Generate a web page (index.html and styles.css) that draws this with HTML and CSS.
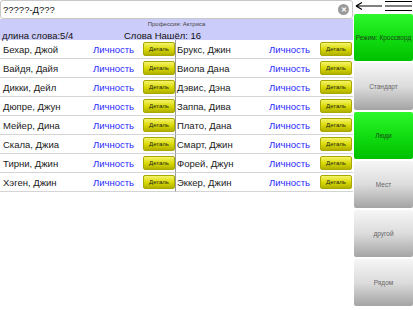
FILE: index.html
```html
<!DOCTYPE html>
<html lang="ru">
<head>
    <meta charset="UTF-8">
    <meta name="viewport" content="width=device-width, initial-scale=1.0">
    <title>Кроссворд</title>
    <link rel="stylesheet" href="styles.css">
</head>
<body>
<div class="app">
    <div class="main">
        <div class="search">
            <span class="query">?????-Д???</span>
            <span class="clear">&#x2715;</span>
        </div>
        <div class="info">
            <div class="prof">Профессия: Актриса</div>
            <div class="stats">
                <span class="len">длина слова:5/4</span>
                <span class="found">Слова Нашёл: 16</span>
            </div>
        </div>
        <div class="list">
            <div class="cell"><span class="name">Бехар, Джой</span><a class="link">Личность</a><button class="detail">Деталь</button></div>
            <div class="cell"><span class="name">Брукс, Джин</span><a class="link">Личность</a><button class="detail">Деталь</button></div>
            <div class="cell"><span class="name">Вайдя, Дайя</span><a class="link">Личность</a><button class="detail">Деталь</button></div>
            <div class="cell"><span class="name">Виола Дана</span><a class="link">Личность</a><button class="detail">Деталь</button></div>
            <div class="cell"><span class="name">Дикки, Дейл</span><a class="link">Личность</a><button class="detail">Деталь</button></div>
            <div class="cell"><span class="name">Дэвис, Дэна</span><a class="link">Личность</a><button class="detail">Деталь</button></div>
            <div class="cell"><span class="name">Дюпре, Джун</span><a class="link">Личность</a><button class="detail">Деталь</button></div>
            <div class="cell"><span class="name">Заппа, Дива</span><a class="link">Личность</a><button class="detail">Деталь</button></div>
            <div class="cell"><span class="name">Мейер, Дина</span><a class="link">Личность</a><button class="detail">Деталь</button></div>
            <div class="cell"><span class="name">Плато, Дана</span><a class="link">Личность</a><button class="detail">Деталь</button></div>
            <div class="cell"><span class="name">Скала, Джиа</span><a class="link">Личность</a><button class="detail">Деталь</button></div>
            <div class="cell"><span class="name">Смарт, Джин</span><a class="link">Личность</a><button class="detail">Деталь</button></div>
            <div class="cell"><span class="name">Тирни, Джин</span><a class="link">Личность</a><button class="detail">Деталь</button></div>
            <div class="cell"><span class="name">Форей, Джун</span><a class="link">Личность</a><button class="detail">Деталь</button></div>
            <div class="cell"><span class="name">Хэген, Джин</span><a class="link">Личность</a><button class="detail">Деталь</button></div>
            <div class="cell"><span class="name">Эккер, Джин</span><a class="link">Личность</a><button class="detail">Деталь</button></div>
        </div>
    </div>

    <div class="side">
        <div class="topbar">
            <svg class="back" width="27" height="10" viewBox="0 0 27 10">
                <path d="M1 5 H27 M1 5 L7 1.5 M1 5 L7 8.5" stroke="#000" stroke-width="1.2" fill="none"/>
            </svg>
            <svg class="menu" width="27" height="12" viewBox="0 0 27 12">
                <path d="M0 1.5 H27 M0 6 H27 M0 10.5 H27" stroke="#000" stroke-width="1.2"/>
            </svg>
        </div>
        <button class="mode green">Режим: Кроссворд</button>
        <button class="mode">Стандарт</button>
        <button class="mode green">Люди</button>
        <button class="mode">Мест</button>
        <button class="mode">другой</button>
        <button class="mode">Рядом</button>
    </div>
</div>
</body>
</html>
```

FILE: styles.css
```css
body {
    margin: 0;
    background-color: #fff;
    font-family: "Liberation Sans", Arial, sans-serif;
    color: #222;
}

.app {
    display: flex;
    width: 413px;
    height: 310px;
    overflow: hidden;
}

.main {
    width: 353px;
}

/* search box */
.search {
    height: 17px;
    border: 1px solid #c8c8c8;
    border-radius: 3px;
    display: flex;
    align-items: center;
    justify-content: space-between;
    padding: 0 3px 0 2px;
}

.query {
    font-size: 9.5px;
    color: #111;
}

.clear {
    width: 11px;
    height: 11px;
    border-radius: 50%;
    background-color: #9a9a9a;
    color: #fff;
    font-size: 7px;
    font-weight: bold;
    line-height: 11px;
    text-align: center;
}

/* info band */
.info {
    height: 21px;
    background-color: #ccccfa;
}

.prof {
    font-size: 6px;
    color: #444;
    text-align: center;
    padding-top: 2px;
    height: 8px;
}

.stats {
    font-size: 9.5px;
    color: #111;
    display: flex;
    padding-left: 2px;
    padding-top: 1px;
}

.len {
    width: 122px;
}

/* result list */
.list {
    display: grid;
    grid-template-columns: 176px 177px;
}

.cell {
    height: 18px;
    border-bottom: 1px solid #d4d4d4;
    display: grid;
    grid-template-columns: 90px 50px 32px;
    align-items: center;
    padding-left: 3px;
}

.cell:nth-child(odd) {
    border-right: 1px solid #999;
    width: 172px;
}

.cell:nth-child(even) {
    padding-left: 1px;
    grid-template-columns: 92px 51px 32px;
}

.name {
    font-size: 9.5px;
    color: #1a1a1a;
    white-space: nowrap;
}

.link {
    font-size: 9.5px;
    color: #2a2aff;
}

.detail {
    height: 14px;
    width: 32px;
    padding: 0;
    font-family: "Liberation Sans", Arial, sans-serif;
    font-size: 6px;
    color: #222;
    border: 1px solid #a8a800;
    border-radius: 2px;
    background: linear-gradient(#f4f46a, #d8d800 55%, #b0b000);
}

/* side panel */
.side {
    width: 60px;
    display: flex;
    flex-direction: column;
    gap: 2px;
}

.topbar {
    height: 12px;
    display: flex;
    align-items: center;
    justify-content: space-between;
    padding: 0 1px 0 2px;
}

.mode {
    height: 47px;
    margin-left: 1px;
    padding: 0;
    border: none;
    border-radius: 2px;
    font-family: "Liberation Sans", Arial, sans-serif;
    font-size: 6.5px;
    white-space: nowrap;
    color: #666;
    background: linear-gradient(#f6f6f6, #dcdcdc 50%, #a4a4a4);
}

.mode.green {
    color: #1a4a1a;
    background: linear-gradient(#2cf82c, #11dd11 50%, #00c000);
}
```
